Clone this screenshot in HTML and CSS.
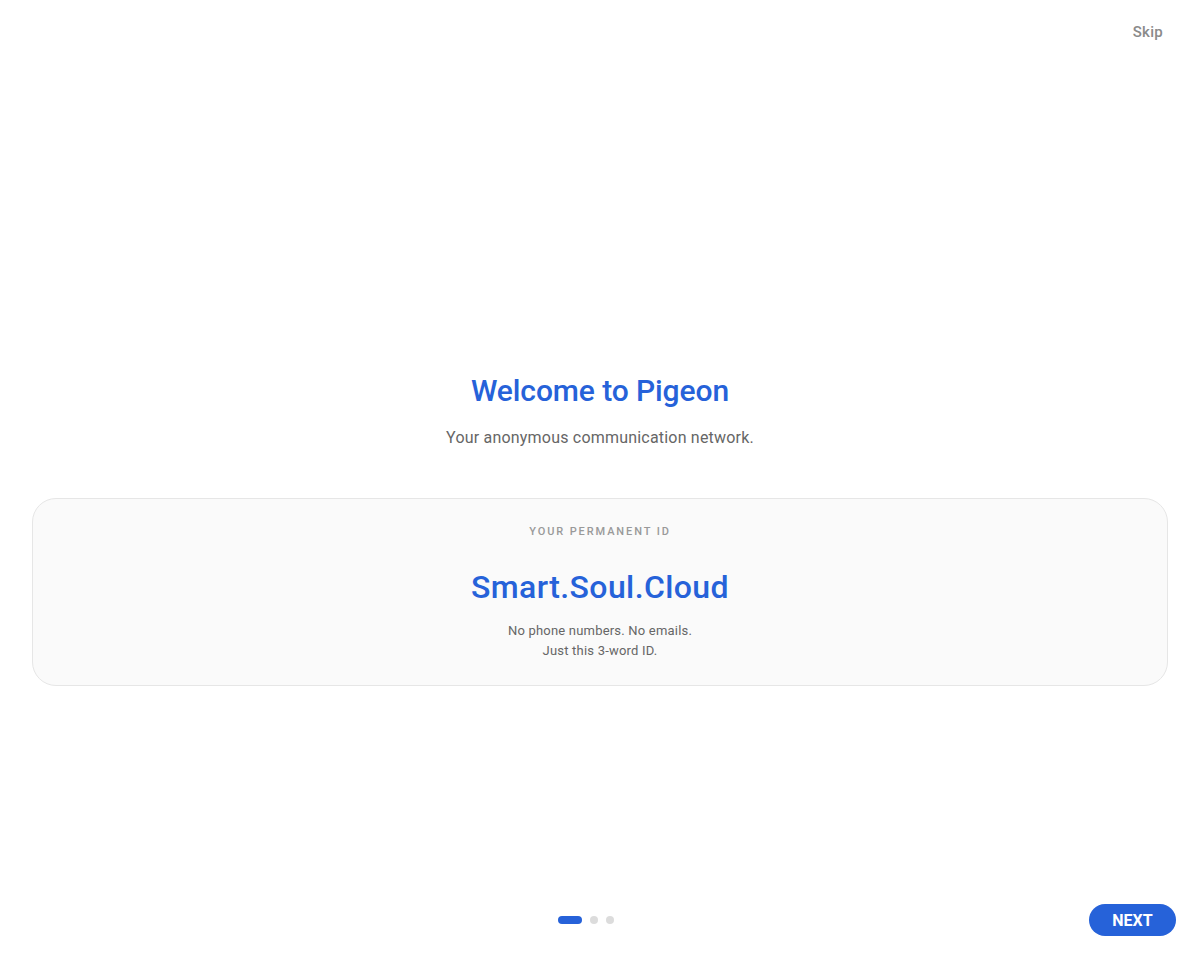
FILE: index.html
```html
<!DOCTYPE html>
<html lang="en">
<head>
    <meta charset="UTF-8">
    <meta name="viewport" content="width=device-width, initial-scale=1.0">
    <title>Pigeon - Welcome</title>
    <link rel="stylesheet" href="styles.css">
</head>
<body>
    <div class="top-bar">
        <button class="skip-btn">Skip</button>
    </div>

    <div class="main">
        <h1 class="title">Welcome to Pigeon</h1>
        <p class="subtitle">Your anonymous communication network.</p>

        <div class="id-card">
            <div class="id-label">YOUR PERMANENT ID</div>
            <div class="id-value">Smart.Soul.Cloud</div>
            <p class="id-note">No phone numbers. No emails.<br>Just this 3-word ID.</p>
        </div>
    </div>

    <div class="bottom-bar">
        <button class="back-btn">BACK</button>
        <div class="dots">
            <span class="dot active"></span>
            <span class="dot"></span>
            <span class="dot"></span>
        </div>
        <button class="next-btn">NEXT</button>
    </div>
</body>
</html>
```

FILE: styles.css
```css
html, body {
    height: 100%;
}

body {
    font-family: Roboto, 'Noto Sans', Arial, sans-serif;
    margin: 0;
    padding: 0;
    background-color: #ffffff;
    display: flex;
    flex-direction: column;
}

button {
    font-family: inherit;
    border: none;
    background: none;
    cursor: pointer;
    padding: 0;
}

.top-bar {
    display: flex;
    justify-content: flex-end;
    padding: 20px 37px 0 0;
}

.skip-btn {
    font-size: 15px;
    line-height: 24px;
    font-weight: 500;
    letter-spacing: 0.3px;
    color: #8a8a8a;
}

.main {
    flex: 1;
    padding: 329px 32px 0;
    text-align: center;
}

.title {
    margin: 0;
    font-size: 30px;
    line-height: 36px;
    font-weight: 500;
    letter-spacing: -0.1px;
    color: #2662d9;
}

.subtitle {
    margin: 17px 0 0;
    font-size: 16px;
    line-height: 24px;
    letter-spacing: 0.2px;
    color: #666666;
}

.id-card {
    margin-top: 48px;
    background: #fafafa;
    border: 1px solid #e6e6e6;
    border-radius: 24px;
    padding: 25px 20px 24px;
}

.id-label {
    font-size: 11px;
    line-height: 16px;
    font-weight: 500;
    letter-spacing: 1.9px;
    color: #999999;
}

.id-value {
    margin-top: 27px;
    font-size: 32px;
    line-height: 40px;
    font-weight: 500;
    letter-spacing: 0.4px;
    color: #2662d9;
}

.id-note {
    margin: 14px 0 0;
    font-size: 13px;
    line-height: 20px;
    letter-spacing: 0.2px;
    color: #666666;
}

.bottom-bar {
    display: flex;
    justify-content: space-between;
    align-items: center;
    padding: 0 24px 24px;
}

.back-btn {
    width: 59px;
    visibility: hidden;
}

.dots {
    display: flex;
    align-items: center;
    gap: 8px;
}

.dot {
    width: 8px;
    height: 8px;
    border-radius: 50%;
    background: #dcdcdc;
}

.dot.active {
    width: 24px;
    border-radius: 4px;
    background: #2662d9;
}

.next-btn {
    width: 87px;
    height: 32px;
    border-radius: 16px;
    background: #2662d9;
    color: #ffffff;
    font-size: 16px;
    font-weight: 700;
}
```
